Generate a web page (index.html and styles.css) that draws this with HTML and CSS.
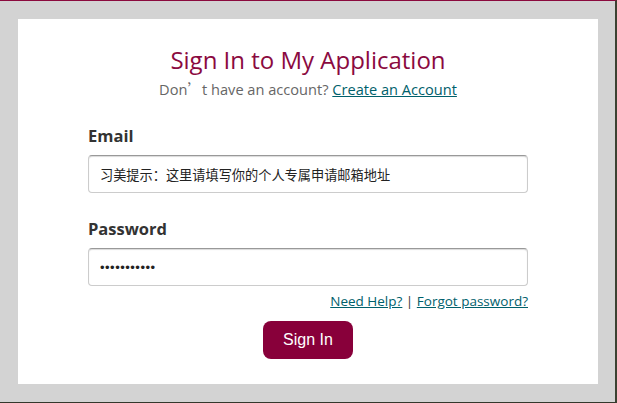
FILE: index.html
```html
<!DOCTYPE html>
<html lang="en">
<head>
<meta charset="utf-8">
<title>Sign In</title>
<link rel="stylesheet" href="styles.css">
</head>
<body>
<main class="card">
  <h1 class="title">Sign In to My Application</h1>
  <p class="subtitle">Don<span class="cjk">’</span>t have an account? <a href="#" class="link">Create an Account</a></p>
  <form class="form">
    <label class="label" for="email">Email</label>
    <input class="input" id="email" type="text" placeholder="习美提示：这里请填写你的个人专属申请邮箱地址">
    <label class="label label-pw" for="pw">Password</label>
    <input class="input input-pw" id="pw" type="password" value="ppppppppppp">
    <div class="help"><a href="#" class="link">Need Help?</a> | <a href="#" class="link">Forgot password?</a></div>
    <div class="actions"><button class="btn" type="button">Sign In</button></div>
  </form>
</main>
</body>
</html>
```
FILE: styles.css
```css
html, body { margin: 0; }
body {
  box-sizing: border-box;
  height: 403px;
  background: #d3d3d3;
  border-top: 1px solid #8b0a3e;
  border-right: 2px solid #3c4232;
  border-bottom: 1px solid #34382c;
  padding: 18px 17px 18px 18px;
  font-family: "Open Sans", "Noto Sans CJK SC", sans-serif;
}
.card {
  background: #fff;
  height: 365px;
  box-sizing: border-box;
  padding-top: 26px;
}
.title {
  margin: 0;
  text-align: center;
  font-weight: 400;
  font-size: 24px;
  line-height: 30px;
  color: #8b0a3f;
}
.subtitle {
  margin: 4px 0 0;
  text-align: center;
  font-size: 14.6px;
  line-height: 20px;
  color: #666;
}
.cjk { font-family: "Noto Sans CJK SC", sans-serif; }
.link { color: #00606b; text-decoration: underline; }
.form {
  width: 440px;
  margin: 26px auto 0;
  display: flex;
  flex-direction: column;
}
.label {
  font-weight: 700;
  font-size: 16.5px;
  line-height: 22px;
  color: #333;
  margin-bottom: 8px;
}
.label-pw { margin-top: 25px; }
.input {
  box-sizing: border-box;
  height: 38px;
  border: 1px solid #ccc;
  border-top-color: #999;
  box-shadow: inset 0 1px 1px rgba(0,0,0,0.15);
  border-radius: 4px;
  padding: 0 11px;
  font-size: 13.2px;
  font-family: "Noto Sans CJK SC", sans-serif;
  color: #222;
  outline: none;
}
.input::placeholder { color: #222; opacity: 1; }
.input-pw { font-family: "Liberation Sans", sans-serif; font-size: 13px; letter-spacing: 0.5px; }
.help {
  text-align: right;
  font-size: 13.5px;
  line-height: 18px;
  color: #333;
  margin-top: 6px;
}
.actions { display: flex; justify-content: center; margin-top: 11px; }
.btn {
  width: 90px;
  height: 38px;
  border: none;
  border-radius: 8px;
  background: #88003a;
  color: #fff;
  font-family: "Liberation Sans", Arial, sans-serif;
  font-size: 16px;
}
```
